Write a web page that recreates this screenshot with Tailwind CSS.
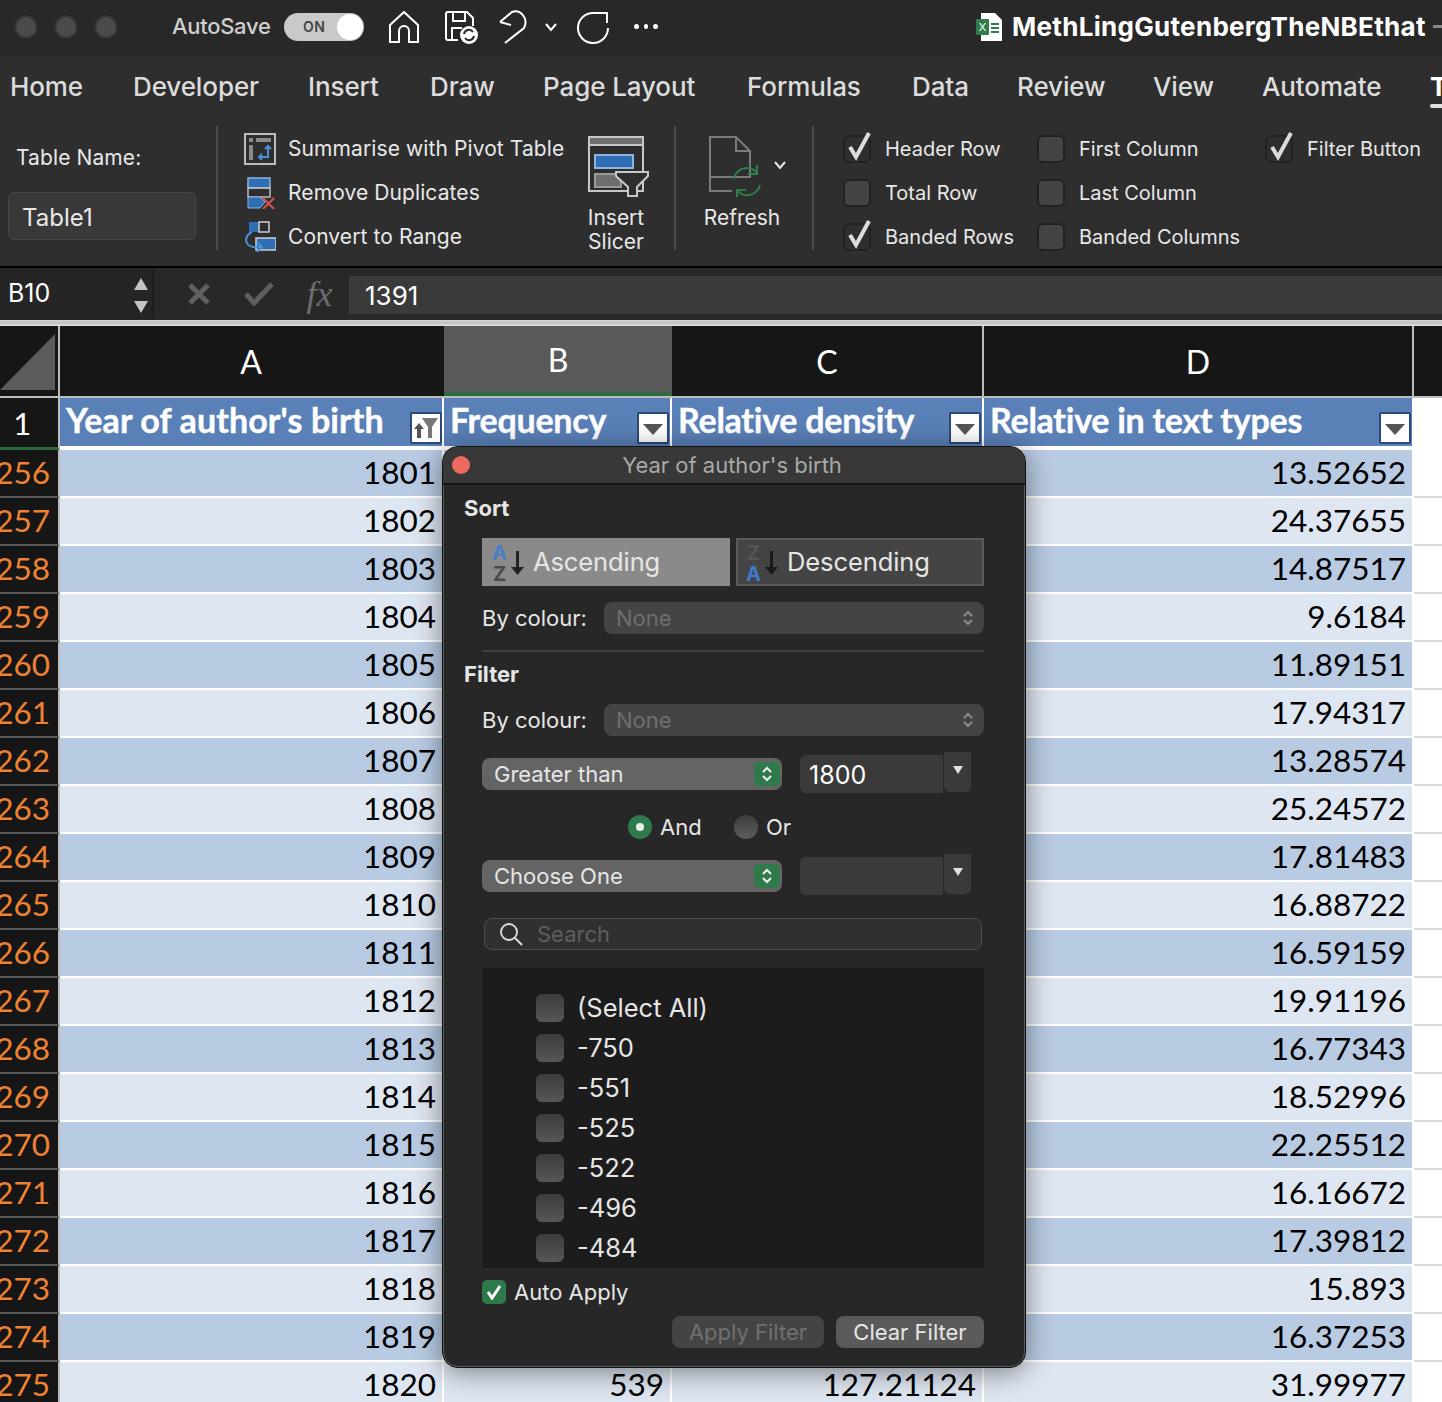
<!DOCTYPE html>
<html lang="en">
  <head>
    <meta charset="UTF-8" />
    <script src="https://cdn.jsdelivr.net/npm/@tailwindcss/browser@4"></script>
    <title>MethLingGutenbergTheNBEthat</title>
  </head>
  <body class="bg-white">
    <div class="relative w-[1442px] h-[1402px] overflow-hidden [font-family:Inter,sans-serif] text-[#e4e4e4]">
      <!-- title bar -->
      <div class="h-[57px] bg-[#282828] flex items-center pb-[4px] [&>*]:shrink-0">
        <div class="flex gap-[16px] pl-[14px] w-[172px]">
          <div class="w-[24px] h-[24px] rounded-full bg-[#4a4a4a] border-2 border-[#333]"></div>
          <div class="w-[24px] h-[24px] rounded-full bg-[#4a4a4a] border-2 border-[#333]"></div>
          <div class="w-[24px] h-[24px] rounded-full bg-[#4a4a4a] border-2 border-[#333]"></div>
        </div>
        <div class="w-[112px] text-[22px] font-medium text-[#cfcfcf] tracking-[-0.3px]">AutoSave</div>
        <div class="w-[80px] h-[28px] rounded-full bg-[#c9c9c9] flex items-center justify-between pl-[19px] pr-[1px]">
          <span class="text-[14px] font-semibold text-[#444] tracking-[0.5px]">ON</span>
          <span class="w-[26px] h-[26px] rounded-full bg-white"></span>
        </div>
        <svg class="ml-[24px]" width="32" height="32" viewBox="0 0 32 32" fill="none" stroke="#fff" stroke-width="2"><path d="M2 14 16 1l14 13v17h-9V20a5 5 0 0 0-10 0v11H2Z" /></svg>
        <svg class="ml-[24px]" width="36" height="34" viewBox="0 0 36 34" fill="none" stroke="#fff" stroke-width="2"><path d="M4 2h19l6 6v8M4 2a2 2 0 0 0-2 2v24a2 2 0 0 0 2 2h10" /><path d="M9 2v9h12V2M8 30V18h10" /><circle cx="25" cy="25" r="9" fill="#fff" stroke="none" /><path d="M20 24a5 5 0 0 1 9-2M30 26a5 5 0 0 1-9 2" stroke="#282828" /></svg>
        <svg class="ml-[18px]" width="30" height="34" viewBox="0 0 30 34" fill="none" stroke="#fff" stroke-width="2"><path d="M2 12 13 15" /><path d="M2 12 14 2C22-1 31 8 26 18L7 33" /></svg>
        <svg class="ml-[16px]" width="14" height="10" viewBox="0 0 14 10" fill="none" stroke="#fff" stroke-width="2"><path d="m2 2 5 6 5-6" /></svg>
        <svg class="ml-[18px]" width="34" height="34" viewBox="0 0 34 34" fill="none" stroke="#fff" stroke-width="2"><path d="M18 3A15 15 0 1 0 32 18" /><path d="M18 3h13v10" /></svg>
        <div class="ml-[24px] flex gap-[5px] w-[24px]">
          <span class="w-[5px] h-[5px] rounded-full bg-white"></span>
          <span class="w-[5px] h-[5px] rounded-full bg-white"></span>
          <span class="w-[5px] h-[5px] rounded-full bg-white"></span>
        </div>
        <svg class="ml-[318px]" width="26" height="28" viewBox="0 0 26 28"><path d="M5 0h14l7 7v21H5Z" fill="#fff" /><rect y="6" width="13" height="16" rx="1" fill="#2f7d4a" /><text x="6.500" y="18" text-anchor="middle" font-size="11" fill="#fff" font-family="Inter">X</text><path d="M15 10h8v2h-8zM15 14h8v2h-8zM15 18h8v2h-8z" fill="#2f7d4a" /></svg>
        <div class="ml-[10px] text-[26px] font-bold text-white whitespace-nowrap tracking-[0.3px]">MethLingGutenbergTheNBEthat</div>
        <div class="ml-[7px] w-[12px] h-[3px] bg-[#888]"></div>
      </div>

      <!-- tabs -->
      <div class="h-[63px] bg-[#2e2e2e] flex items-center pl-[10px] pb-[4px] text-[26px] font-medium text-[#dcdcdc] tracking-[-0.1px] whitespace-nowrap">
        <div class="w-[123px] shrink-0">Home</div>
        <div class="w-[175px] shrink-0">Developer</div>
        <div class="w-[122px] shrink-0">Insert</div>
        <div class="w-[113px] shrink-0">Draw</div>
        <div class="w-[204px] shrink-0">Page Layout</div>
        <div class="w-[165px] shrink-0">Formulas</div>
        <div class="w-[105px] shrink-0">Data</div>
        <div class="w-[136px] shrink-0">Review</div>
        <div class="w-[109px] shrink-0">View</div>
        <div class="w-[168px] shrink-0">Automate</div>
        <div class="relative shrink-0 font-bold text-white">T<span class="absolute left-0 top-[37px] w-[20px] h-[4px] rounded-full bg-[#ddd]"></span></div>
      </div>

      <!-- ribbon -->
      <div class="h-[148px] bg-[#2e2e2e] border-b-2 border-black flex text-[21px] text-[#e8e8e8] whitespace-nowrap">
        <div class="w-[216px] shrink-0 pl-[8px] pr-[20px]">
          <div class="pl-[8px] pt-[22px] h-[72px] tracking-[0.1px]">Table Name:</div>
          <div class="h-[48px] w-[188px] rounded-[6px] bg-[#383838] border border-[#464646] flex items-center pl-[13px] pt-[4px] text-[24px]">Table1</div>
        </div>
        <div class="w-[2px] h-[124px] mt-[6px] bg-[#4c4c4c] shrink-0"></div>

        <div class="w-[344px] shrink-0 pl-[26px] pt-[7px] flex flex-col tracking-[0.1px]">
          <div class="h-[44px] flex items-center gap-[12px]">
            <svg class="shrink-0" width="32" height="32" viewBox="0 0 32 32" fill="none"><rect x="1" y="1" width="30" height="30" stroke="#bdbdbd" stroke-width="2" /><rect x="5" y="5" width="4" height="4" fill="#8a8a8a" /><rect x="12" y="5" width="15" height="4" fill="#8a8a8a" /><rect x="5" y="12" width="4" height="15" fill="#8a8a8a" /><path d="M24 13v11h-9m3-3-3 3 3 3M21 16l3-3 3 3" stroke="#4a90d9" stroke-width="2" /></svg>
            <span>Summarise with Pivot Table</span>
          </div>
          <div class="h-[44px] flex items-center gap-[12px]">
            <svg class="shrink-0" width="32" height="32" viewBox="0 0 32 32" fill="none"><rect x="4" y="1" width="22" height="10" fill="#2f6db5" stroke="#8fb4dd" stroke-width="1.500" /><rect x="4" y="11" width="22" height="9" stroke="#bdbdbd" stroke-width="1.500" /><path d="M4 20h12l5 5-5 6H4Z" fill="#2f6db5" stroke="#8fb4dd" stroke-width="1" /><path d="m19 21 11 11m0-11L19 32" stroke="#d9534f" stroke-width="2" /></svg>
            <span>Remove Duplicates</span>
          </div>
          <div class="h-[44px] flex items-center gap-[12px]">
            <svg class="shrink-0" width="32" height="32" viewBox="0 0 32 32" fill="none"><rect x="5" y="1" width="10" height="10" fill="#2f6db5" /><rect x="15" y="1" width="10" height="10" stroke="#d0d0d0" stroke-width="1.500" /><rect x="12" y="17" width="20" height="12" fill="#2f6db5" stroke="#d0d0d0" stroke-width="1.500" /><path d="M8 11C0 15 0 24 9 26h9m-5-5 5 5-5 5" stroke="#4a90d9" stroke-width="2" /></svg>
            <span>Convert to Range</span>
          </div>
        </div>

        <div class="w-[112px] shrink-0 pl-[25px] pt-[15px]">
          <svg width="64" height="62" viewBox="0 0 64 62" fill="none"><rect x="2" y="2" width="54" height="54" stroke="#c8c8c8" stroke-width="2" /><rect x="2" y="2" width="54" height="8" fill="#6e6e6e" stroke="#c8c8c8" stroke-width="2" /><rect x="8" y="20" width="38" height="13" fill="#2f6db5" stroke="#8fb4dd" stroke-width="2" /><rect x="8" y="39" width="26" height="13" fill="#6e6e6e" stroke="#9a9a9a" stroke-width="2" /><path d="M29 37h32v4L50 52v9h-9v-9L29 41Z" fill="#2e2e2e" stroke="#c8c8c8" stroke-width="2" /></svg>
          <div class="text-center -ml-[25px] pl-[2px] w-[106px] leading-[24px] mt-[9px]">Insert<br />Slicer</div>
        </div>
        <div class="w-[2px] h-[124px] mt-[6px] bg-[#4c4c4c] shrink-0"></div>

        <div class="w-[136px] shrink-0 relative pt-[15px] pl-[32px]">
          <svg width="58" height="62" viewBox="0 0 58 62" fill="none"><path d="M2 2h26l14 14v26H2Z M28 2v14h14" stroke="#7a7a7a" stroke-width="2" /><path d="M2 42v14h22" stroke="#7a7a7a" stroke-width="2" /><path d="M26 44a13 13 0 0 1 23-6m3 12a13 13 0 0 1-23 5M49 30v9h-9M29 64v-9h9" stroke="#2e7d4a" stroke-width="2" /></svg>
          <svg class="absolute left-[97px] top-[40px]" width="14" height="10" viewBox="0 0 14 10" fill="none" stroke="#e8e8e8" stroke-width="2"><path d="m2 2 5 6 5-6" /></svg>
          <div class="absolute left-0 top-[82px] w-[132px] text-center">Refresh</div>
        </div>
        <div class="w-[2px] h-[124px] mt-[6px] bg-[#4c4c4c] shrink-0"></div>

        <div class="flex-1 grid grid-cols-[194px_228px_1fr] grid-rows-[44px_44px_44px] pl-[29px] pt-[7px] items-center text-[20px]">
          <div class="flex items-center gap-[14px]"><span class="relative w-[28px] h-[28px] rounded-[6px] border-2 border-[#222] bg-[#2e2e2e]"><svg class="absolute left-[3px] -top-[7px]" width="24" height="32" viewBox="0 0 24 32" fill="none" stroke="#dcdcdc" stroke-width="4"><path d="m2 17 6 10L21 3" /></svg></span>Header Row</div>
          <div class="flex items-center gap-[14px]"><span class="w-[28px] h-[28px] rounded-[6px] border-2 border-[#222] bg-[#444]"></span>First Column</div>
          <div class="flex items-center gap-[14px]"><span class="relative w-[28px] h-[28px] rounded-[6px] border-2 border-[#222] bg-[#2e2e2e]"><svg class="absolute left-[3px] -top-[7px]" width="24" height="32" viewBox="0 0 24 32" fill="none" stroke="#dcdcdc" stroke-width="4"><path d="m2 17 6 10L21 3" /></svg></span>Filter Button</div>
          <div class="flex items-center gap-[14px]"><span class="w-[28px] h-[28px] rounded-[6px] border-2 border-[#222] bg-[#444]"></span>Total Row</div>
          <div class="flex items-center gap-[14px]"><span class="w-[28px] h-[28px] rounded-[6px] border-2 border-[#222] bg-[#444]"></span>Last Column</div>
          <div></div>
          <div class="flex items-center gap-[14px]"><span class="relative w-[28px] h-[28px] rounded-[6px] border-2 border-[#222] bg-[#2e2e2e]"><svg class="absolute left-[3px] -top-[7px]" width="24" height="32" viewBox="0 0 24 32" fill="none" stroke="#dcdcdc" stroke-width="4"><path d="m2 17 6 10L21 3" /></svg></span>Banded Rows</div>
          <div class="flex items-center gap-[14px]"><span class="w-[28px] h-[28px] rounded-[6px] border-2 border-[#222] bg-[#444]"></span>Banded Columns</div>
        </div>
      </div>

      <!-- formula bar -->
      <div class="h-[52px] bg-[#282828] flex items-center">
        <div class="w-[154px] h-[50px] bg-[#252525] border-r-2 border-[#1e1e1e] shrink-0 relative flex items-center pl-[8px] text-[25px] text-white">
          B10
          <span class="absolute left-[134px] top-[9px] border-x-[7px] border-x-transparent border-b-[12px] border-b-[#c4c4c4]"></span>
          <span class="absolute left-[134px] top-[32px] border-x-[7px] border-x-transparent border-t-[12px] border-t-[#c4c4c4]"></span>
        </div>
        <svg class="ml-[34px]" width="22" height="22" viewBox="0 0 22 22" fill="none" stroke="#5f5f5f" stroke-width="5"><path d="m2 2 18 18M20 2 2 20" /></svg>
        <svg class="ml-[34px]" width="30" height="24" viewBox="0 0 30 24" fill="none" stroke="#5f5f5f" stroke-width="5"><path d="m2 12 8 9L28 2" /></svg>
        <div class="w-[75px] text-center pl-[16px] [font-family:'Liberation_Serif',serif] italic text-[36px] leading-none text-[#6d6d6d]">fx</div>
        <div class="flex-1 h-[38px] mt-[2px] bg-[#3a3a3a] flex items-center pl-[16px] text-[26px] text-white">1391</div>
      </div>

      <div class="h-[6px] bg-[linear-gradient(#d8d8d8,#bdbdbd,#e4e4e4)]"></div>

      <!-- sheet -->
      <div class="[font-family:Lato,sans-serif]">
        <div class="grid grid-cols-[60px_384px_228px_312px_430px_1fr] h-[72px] bg-[#161616] border-b-2 border-[#bdbdbd] text-white text-[32px]">
          <div class="border-r-2 border-[#bdbdbd] relative">
            <svg class="absolute left-0 top-[8px]" width="55" height="56" viewBox="0 0 55 56"><path d="M0 56 55 0v56Z" fill="#5c5c5c" /></svg>
          </div>
          <div class="flex items-center justify-center pt-[2px] border-r-2 border-[#161616]">A</div>
          <div class="flex items-center justify-center pt-[2px] bg-[#5a5a5a] border-b-[4px] border-[#2e6b42]">B</div>
          <div class="flex items-center justify-center pt-[2px] border-r-2 border-[#bdbdbd]">C</div>
          <div class="flex items-center justify-center pt-[2px] border-r-2 border-[#bdbdbd]">D</div>
          <div></div>
        </div>

        <div class="grid grid-cols-[60px_384px_228px_312px_430px_1fr] h-[52px] text-white text-[34px] font-bold tracking-[-0.25px] [-webkit-text-stroke:0.4px_white] whitespace-nowrap">
          <div class="bg-[#161616] border-r-2 border-[#bdbdbd] border-b-[4px] border-b-[#2e6b42] flex items-center justify-center pr-[14px] pt-[2px] font-normal text-[31px] [-webkit-text-stroke:0]">1</div>
          <div class="h-[48px] bg-[#5a80b8] border-r-2 border-white relative pl-[6px] leading-[44px] tracking-[0.1px]">Year of author's birth
            <span class="absolute right-0 top-[14px] w-[32px] h-[32px] bg-white border-2 border-[#2c4a78] rounded-[2px] flex items-center justify-center">
              <svg width="26" height="22" viewBox="0 0 26 22"><path d="M6 6 1 12h3v9h4v-9h3Z" fill="#555" /><path d="M9 1h16l-6 9v11h-4V10Z" fill="#777" /></svg>
            </span>
          </div>
          <div class="h-[48px] bg-[#5a80b8] border-r-2 border-white relative pl-[6px] leading-[44px]">Frequency
            <span class="absolute right-[1px] top-[14px] w-[32px] h-[32px] bg-white border-2 border-[#2c4a78] rounded-[2px] flex items-center justify-center"><span class="mt-[3px] border-x-[10px] border-x-transparent border-t-[11px] border-t-[#555]"></span></span>
          </div>
          <div class="h-[48px] bg-[#5a80b8] border-r-2 border-white relative pl-[6px] leading-[44px]">Relative density
            <span class="absolute right-[1px] top-[14px] w-[32px] h-[32px] bg-white border-2 border-[#2c4a78] rounded-[2px] flex items-center justify-center"><span class="mt-[3px] border-x-[10px] border-x-transparent border-t-[11px] border-t-[#555]"></span></span>
          </div>
          <div class="h-[48px] bg-[#5a80b8] border-r-2 border-white relative pl-[6px] leading-[44px]">Relative in text types
            <span class="absolute right-[1px] top-[14px] w-[32px] h-[32px] bg-white border-2 border-[#2c4a78] rounded-[2px] flex items-center justify-center"><span class="mt-[3px] border-x-[10px] border-x-transparent border-t-[11px] border-t-[#555]"></span></span>
          </div>
          <div class="h-[48px] bg-white"></div>
        </div>

        <div id="rows"></div>
      </div>

      <!-- filter popup -->
      <div class="absolute left-[442px] top-[446px] w-[584px] h-[922px] rounded-[16px] bg-[#272727] border border-[#111] outline outline-[#5a5a5a] -outline-offset-2 shadow-[0_4px_28px_rgba(0,0,0,0.45)] overflow-hidden text-[#e6e6e6] text-[22px] whitespace-nowrap">
        <div class="h-[38px] bg-[#383838] border-b-2 border-[#161616] flex items-center justify-center relative text-[#a9a9a9] pr-[4px]">
          <span class="absolute left-[9px] top-[9px] w-[18px] h-[18px] rounded-full bg-[#ee6a5f]"></span>
          Year of author's birth
        </div>
        <div class="pl-[39px] pr-[41px]">
          <div class="-ml-[18px] h-[50px] pt-[9px] font-bold leading-[28px]">Sort</div>
          <div class="flex gap-[6px] mt-[3px] h-[48px] text-[25.500px] tracking-[-0.1px]">
            <div class="w-[248px] bg-[#8a8a8a] flex items-center pl-[10px] gap-[3px]">
              <svg width="38" height="42" viewBox="0 0 38 42"><text x="0" y="19" font-size="20" font-weight="700" font-family="Inter" fill="#4a7cc7">A</text><text x="1" y="40" font-size="20" font-weight="700" font-family="Inter" fill="#4a4a4a">Z</text><path d="M24 10h3v16h5l-6.500 8L19 26h5Z" fill="#222" /></svg>
              Ascending
            </div>
            <div class="w-[248px] bg-[#444] border-2 border-[#5a5a5a] flex items-center pl-[8px] gap-[3px]">
              <svg width="38" height="42" viewBox="0 0 38 42"><text x="1" y="19" font-size="20" font-weight="700" font-family="Inter" fill="#555">Z</text><text x="0" y="40" font-size="20" font-weight="700" font-family="Inter" fill="#3f78cc">A</text><path d="M24 10h3v16h5l-6.500 8L19 26h5Z" fill="#1a1a1a" /></svg>
              Descending
            </div>
          </div>
          <div class="flex items-center mt-[16px] h-[32px]">
            <span class="w-[122px]">By colour:</span>
            <div class="flex-1 h-[32px] rounded-[8px] bg-[#444] flex items-center justify-between pl-[12px] pr-[10px] text-[#6e6e6e]">None
              <svg width="12" height="18" viewBox="0 0 12 18" fill="none" stroke="#8a8a8a" stroke-width="2"><path d="m2 7 4-4 4 4M2 11l4 4 4-4" /></svg>
            </div>
          </div>
          <div class="h-[2px] bg-[#3f3f3f] mt-[16px]"></div>
          <div class="-ml-[18px] mt-[8px] h-[28px] font-bold leading-[28px]">Filter</div>
          <div class="flex items-center mt-[16px] h-[32px]">
            <span class="w-[122px]">By colour:</span>
            <div class="flex-1 h-[32px] rounded-[8px] bg-[#444] flex items-center justify-between pl-[12px] pr-[10px] text-[#6e6e6e]">None
              <svg width="12" height="18" viewBox="0 0 12 18" fill="none" stroke="#8a8a8a" stroke-width="2"><path d="m2 7 4-4 4 4M2 11l4 4 4-4" /></svg>
            </div>
          </div>
          <div class="flex mt-[16px] h-[40px] gap-[18px]">
            <div class="w-[300px] h-[32px] mt-[6px] rounded-[8px] bg-[#646464] flex items-center justify-between pl-[12px] pr-[2px]">Greater than
              <span class="w-[26px] h-[24px] rounded-[5px] bg-[#2f7a4b] flex items-center justify-center"><svg width="12" height="18" viewBox="0 0 12 18" fill="none" stroke="#f0f0f0" stroke-width="2"><path d="m2 7 4-4 4 4M2 11l4 4 4-4" /></svg></span>
            </div>
            <div class="flex">
              <div class="w-[143px] h-[38px] mt-[3px] bg-[#3a3a3a] rounded-l-[6px] flex items-center pl-[9px] pt-[3px] text-[25px] text-white">1800</div>
              <div class="w-[27px] h-[40px] ml-[1px] bg-[#3a3a3a] rounded-b-[6px] flex justify-center pt-[14px]"><span class="border-x-[5px] border-x-transparent border-t-[8px] border-t-[#e0e0e0]"></span></div>
            </div>
          </div>
          <div class="flex items-center h-[32px] mt-[19px] pl-[146px]">
            <span class="w-[24px] h-[24px] rounded-full bg-[#2f7a4b] flex items-center justify-center"><span class="w-[8px] h-[8px] rounded-full bg-[#eee]"></span></span>
            <span class="ml-[8px] w-[74px]">And</span>
            <span class="w-[24px] h-[24px] rounded-full bg-[linear-gradient(#3e3e3e,#5c5c5c)]"></span>
            <span class="ml-[8px]">Or</span>
          </div>
          <div class="flex mt-[11px] h-[40px] gap-[18px]">
            <div class="w-[300px] h-[32px] mt-[6px] rounded-[8px] bg-[#646464] flex items-center justify-between pl-[12px] pr-[2px]">Choose One
              <span class="w-[26px] h-[24px] rounded-[5px] bg-[#2f7a4b] flex items-center justify-center"><svg width="12" height="18" viewBox="0 0 12 18" fill="none" stroke="#f0f0f0" stroke-width="2"><path d="m2 7 4-4 4 4M2 11l4 4 4-4" /></svg></span>
            </div>
            <div class="flex">
              <div class="w-[143px] h-[38px] mt-[3px] bg-[#3a3a3a] rounded-l-[6px]"></div>
              <div class="w-[27px] h-[40px] ml-[1px] bg-[#3a3a3a] rounded-b-[6px] flex justify-center pt-[14px]"><span class="border-x-[5px] border-x-transparent border-t-[8px] border-t-[#e0e0e0]"></span></div>
            </div>
          </div>
          <div class="mx-[2px] mt-[24px] h-[32px] rounded-[8px] bg-[#303030] border border-[#4c4c4c] flex items-center pl-[14px] gap-[14px] text-[#5f5f5f]">
            <svg width="24" height="24" viewBox="0 0 24 24" fill="none" stroke="#e0e0e0" stroke-width="1.800"><circle cx="10" cy="10" r="8" /><path d="m16 16 7 7" /></svg>
            Search
          </div>
          <div class="mt-[18px] h-[300px] bg-[#1c1c1c] pt-[20px] pl-[54px] text-[25.500px] overflow-hidden">
            <div class="flex items-center h-[40px] gap-[13px]"><span class="w-[28px] h-[28px] rounded-[6px] bg-[linear-gradient(#3c3c3c,#565656)]"></span>(Select All)</div>
            <div class="flex items-center h-[40px] gap-[13px]"><span class="w-[28px] h-[28px] rounded-[6px] bg-[linear-gradient(#3c3c3c,#565656)]"></span>-750</div>
            <div class="flex items-center h-[40px] gap-[13px]"><span class="w-[28px] h-[28px] rounded-[6px] bg-[linear-gradient(#3c3c3c,#565656)]"></span>-551</div>
            <div class="flex items-center h-[40px] gap-[13px]"><span class="w-[28px] h-[28px] rounded-[6px] bg-[linear-gradient(#3c3c3c,#565656)]"></span>-525</div>
            <div class="flex items-center h-[40px] gap-[13px]"><span class="w-[28px] h-[28px] rounded-[6px] bg-[linear-gradient(#3c3c3c,#565656)]"></span>-522</div>
            <div class="flex items-center h-[40px] gap-[13px]"><span class="w-[28px] h-[28px] rounded-[6px] bg-[linear-gradient(#3c3c3c,#565656)]"></span>-496</div>
            <div class="flex items-center h-[40px] gap-[13px]"><span class="w-[28px] h-[28px] rounded-[6px] bg-[linear-gradient(#3c3c3c,#565656)]"></span>-484</div>
          </div>
          <div class="flex items-center gap-[8px] mt-[12px] h-[24px]">
            <span class="w-[24px] h-[24px] rounded-[5px] bg-[#2f7a4b] flex items-center justify-center"><svg width="16" height="16" viewBox="0 0 16 16" fill="none" stroke="#fff" stroke-width="3"><path d="m2 8 4 6L14 2" /></svg></span>
            Auto Apply
          </div>
          <div class="flex justify-end gap-[12px] mt-[12px]">
            <div class="w-[152px] h-[32px] rounded-[8px] bg-[#444] text-[#707070] flex items-center justify-center">Apply Filter</div>
            <div class="w-[148px] h-[32px] rounded-[8px] bg-[#5a5a5a] flex items-center justify-center">Clear Filter</div>
          </div>
        </div>
      </div>
    </div>

    <script>
      const dValues = ["13.52652","24.37655","14.87517","9.6184","11.89151","17.94317","13.28574","25.24572","17.81483","16.88722","16.59159","19.91196","16.77343","18.52996","22.25512","16.16672","17.39812","15.893","16.37253","31.99977"];
      const darkCell = "bg-[#b9cbe3] border-r-2 border-white flex items-center justify-end pr-[6px] h-[46px]";
      const lightCell = "bg-[#dee6f1] border-r-2 border-white flex items-center justify-end pr-[6px] h-[46px]";
      let html = "";
      dValues.forEach((d, i) => {
        const cell = i % 2 === 0 ? darkCell : lightCell;
        const last = i === dValues.length - 1;
        html += `<div class="grid grid-cols-[60px_384px_228px_312px_430px_1fr] h-[48px] text-[31.500px] text-black bg-white">
          <div class="bg-[#161616] border-r-2 border-r-[#bdbdbd] border-b-2 border-b-[#555] text-[#ee8232] flex items-center justify-end pr-[8px] overflow-hidden">${256 + i}</div>
          <div class="${cell}">${1801 + i}</div>
          <div class="${cell}">${last ? "539" : ""}</div>
          <div class="${cell}">${last ? "127.21124" : ""}</div>
          <div class="${cell}">${d}</div>
          <div class="border-b-2 border-[#d9d9d9]"></div>
        </div>`;
      });
      document.getElementById("rows").innerHTML = html;
    </script>
  </body>
</html>
